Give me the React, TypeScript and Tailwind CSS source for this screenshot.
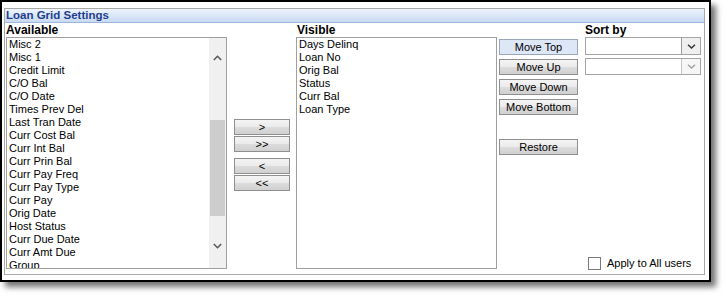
// Loan grid settings – pilih kolom yang tampil di grid pinjaman
import React from 'react'

const AVAILABLE = [
  'Misc 2',
  'Misc 1',
  'Credit Limit',
  'C/O Bal',
  'C/O Date',
  'Times Prev Del',
  'Last Tran Date',
  'Curr Cost Bal',
  'Curr Int Bal',
  'Curr Prin Bal',
  'Curr Pay Freq',
  'Curr Pay Type',
  'Curr Pay',
  'Orig Date',
  'Host Status',
  'Curr Due Date',
  'Curr Amt Due',
  'Group',
]

const VISIBLE = ['Days Delinq', 'Loan No', 'Orig Bal', 'Status', 'Curr Bal', 'Loan Type']

const BTN_BASE =
  'w-full h-[16px] border border-[#8f8f8f] text-[11px] leading-[14px] text-black text-center'
const BTN_IDLE = 'bg-[linear-gradient(#f4f4f4_0%,#ebebeb_48%,#dcdcdc_52%,#d0d0d0_100%)]'
const BTN_HOT = 'bg-[#dde7f5] border-[#9aa7b8]'

const LABEL_CLS = 'h-[13px] text-[12px] font-bold leading-[13px]'

function Btn({ label, hot, className = '' }: { label: string; hot?: boolean; className?: string }) {
  return <div className={`${BTN_BASE} ${hot ? BTN_HOT : BTN_IDLE} ${className}`}>{label}</div>
}

function Chevron({ dir, color = '#5a5a5a' }: { dir: 'up' | 'down'; color?: string }) {
  return (
    <svg width="9" height="6" viewBox="0 0 9 6" className="block">
      <polyline
        points={dir === 'up' ? '0.8,5 4.5,1.3 8.2,5' : '0.8,1 4.5,4.7 8.2,1'}
        fill="none"
        stroke={color}
        strokeWidth="1.6"
      />
    </svg>
  )
}

function Select({ disabled }: { disabled?: boolean }) {
  return (
    <div className="w-full h-full border border-[#a5a5a5] bg-white flex justify-end">
      <div
        className={`w-[19px] h-full border-l flex items-center justify-center ${
          disabled ? 'border-[#c4c4c4] bg-[#f6f6f6]' : 'border-[#9a9a9a] bg-[#efefef]'
        }`}
      >
        <svg width="9" height="5" viewBox="0 0 9 5" className="block">
          <polyline
            points="1,0.8 4.5,4 8,0.8"
            fill="none"
            stroke={disabled ? '#a0a0a0' : '#333'}
            strokeWidth="1.4"
          />
        </svg>
      </div>
    </div>
  )
}

export default function App() {
  return (
    <div className="w-[726px] h-[294px] bg-white text-black font-['Liberation_Sans',Arial,sans-serif]">
      {/* Bingkai hitam + bayangan */}
      <div className="w-[711px] h-[282px] border-2 border-black bg-white shadow-[5px_5px_6px_rgba(0,0,0,0.55)] pl-[2px] pt-[6px]">
        <div className="w-[701px] h-[267px] border border-[#a9a9a9] flex flex-col">
          <div className="h-[14px] border-b border-[#9bb7e0] bg-[linear-gradient(#eef4fc,#c8d9f1)] pl-[1px] text-[11.5px] font-bold leading-[13px] text-[#1e3f8f]">
            Loan Grid Settings
          </div>

          <div className="flex-1 flex pl-[1px] pt-[1px]">
            {/* Available */}
            <div className="w-[221px] flex flex-col">
              <div className={LABEL_CLS}>Available</div>
              <div className="h-[232px] border border-[#a0a0a0] flex">
                <div className="flex-1 overflow-hidden pl-[2px]">
                  {AVAILABLE.map(item => (
                    <div key={item} className="h-[13px] text-[11px] leading-[13px] whitespace-nowrap">
                      {item}
                    </div>
                  ))}
                </div>
                <div className="w-[17px] bg-[#f0f0f0] flex flex-col items-center">
                  <div className="pt-[17px]">
                    <Chevron dir="up" />
                  </div>
                  <div className="w-[15px] h-[96px] mt-[59px] bg-[#cdcdcd]" />
                  <div className="mt-[27px]">
                    <Chevron dir="down" />
                  </div>
                </div>
              </div>
            </div>

            {/* Tombol pindah */}
            <div className="ml-[7px] w-[56px] pt-[95px] flex flex-col gap-[1px]">
              <Btn label=">" />
              <Btn label=">>" />
              <Btn label="<" className="mt-[5px]" />
              <Btn label="<<" />
            </div>

            {/* Visible */}
            <div className="ml-[6px] w-[201px] flex flex-col">
              <div className={`${LABEL_CLS} pl-[1px]`}>Visible</div>
              <div className="h-[232px] border border-[#a0a0a0] pl-[2px] overflow-hidden">
                {VISIBLE.map(item => (
                  <div key={item} className="h-[13px] text-[11px] leading-[13px] whitespace-nowrap">
                    {item}
                  </div>
                ))}
              </div>
            </div>

            {/* Urutan */}
            <div className="ml-[2px] w-[79px] pt-[15px] flex flex-col gap-[4px]">
              <Btn label="Move Top" hot />
              <Btn label="Move Up" />
              <Btn label="Move Down" />
              <Btn label="Move Bottom" />
              <Btn label="Restore" className="mt-[20px]" />
            </div>

            {/* Sort by */}
            <div className="ml-[7px] w-[116px] flex flex-col pb-[4px]">
              <div className={LABEL_CLS}>Sort by</div>
              <div className="h-[18px]">
                <Select />
              </div>
              <div className="h-[17px] mt-[3px]">
                <Select disabled />
              </div>
              <div className="mt-auto ml-[3px] flex items-center gap-[6px]">
                <div className="w-[13px] h-[13px] border border-[#7a7a7a] bg-white" />
                <span className="text-[11px] leading-[13px]">Apply to All users</span>
              </div>
            </div>
          </div>
        </div>
      </div>
    </div>
  )
}
